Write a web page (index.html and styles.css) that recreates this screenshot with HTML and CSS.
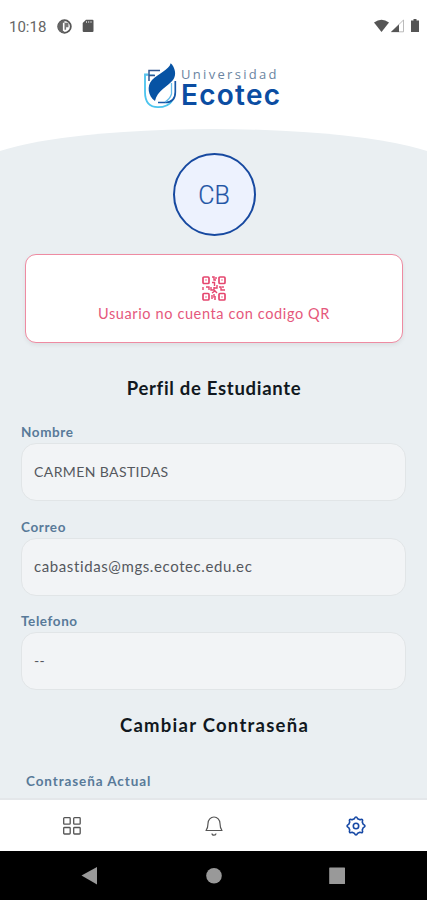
FILE: index.html
```html
<!DOCTYPE html>
<html lang="es">
<head>
<meta charset="utf-8">
<title>Perfil</title>
<link rel="stylesheet" href="styles.css">
</head>
<body>
<div class="screen">
  <div class="status">
    <span class="time">10:18</span>
    <svg class="s-app" width="15" height="15" viewBox="0 0 14 14"><circle cx="7" cy="7" r="5.900" fill="#fff" stroke="#555" stroke-width="1.700"/><path d="M7 1v2.500H5.500V11L7 12v1A6 6 0 0 1 3.500 2Z" fill="#666"/><path d="M7 3.500h3.700v4.200H8.500V10H7Z" fill="#777"/></svg>
    <svg class="s-sd" width="12" height="14" viewBox="0 0 12 14"><path d="M4 .7h6.500q1 0 1 1V12q0 1-1 1H1.700q-1 0-1-1V4Z" fill="#555"/><path d="M4.500 2v2M6.700 2v2M9 2v2" stroke="#bbb" stroke-width="1"/></svg>
    <div class="spacer"></div>
    <svg width="44" height="14" viewBox="0 0 44 14"><path d="M0 3.500Q7.500-2 15 3.500L7.500 13Z" fill="#555"/><path d="M17.500 12.800 29.500 1v11.800Z" fill="#fff" stroke="#aaa" stroke-width=".8"/><path d="M17 13 25 5.500V13Z" fill="#555"/></svg>
    <svg class="s-bat" width="8" height="14" viewBox="0 0 8 14"><path d="M2.500 0h3v1.500H8V13H0V1.500h2.500Z" fill="#555"/></svg>
  </div>
  <header class="brand">
    <svg width="34" height="46" viewBox="0 0 34 46"><g fill="none"><path d="M4 11.500H1V29Q1 44.200 14 44.200 24 44.200 28 38" stroke="#4bc4ee" stroke-width="1.800"/><path d="M1 12H10.500" stroke="#63bfea" stroke-width="1.300"/><path d="M5 18V7.500H16M5 12.500H11" stroke="#31568f" stroke-width="1.500"/><path d="M31.300 18V29Q31.300 39.500 21 39.500H14" stroke="#1558a8" stroke-width="1.700"/><path d="M27.500 20V31Q26 36 21 39" stroke="#65bce9" stroke-width="1.300"/></g><path d="M26.700 .2C31 4 33 12 29 17 24 23 13 28 11 38 4 33 2.500 23 8 17 14 10.500 25 7 26.700 .2Z" fill="#0753a4"/></svg>
    <div class="brand-name"><span class="uni">Universidad</span><span class="eco">Ecotec</span></div>
  </header>
  <main class="content">
    <svg class="arch" width="427" height="40" viewBox="0 0 427 40"><ellipse cx="213.500" cy="38" rx="235" ry="38" fill="#eaeff2"/></svg>
    <div class="avatar"><span>CB</span></div>
    <section class="qr-card">
      <svg width="24" height="25" viewBox="0 0 24 25" fill="none" stroke="#e5476f"><g stroke-width="1.700"><rect x="1" y="1" width="6" height="6.500" rx="1"/><rect x="17" y="1" width="6" height="6.500" rx="1"/><rect x="1" y="17.500" width="6" height="6.500" rx="1"/><rect x="17" y="17.500" width="6" height="6.500" rx="1"/></g><path d="M10 1h2v3h2M10 6.500h2.500V10M14 1v2M1 11v3M4 11h3v3M9 11v3h3v-3M15 9v3h-3M17 11h2v3h4M21 10v2M10 17l3-2 2 2M10 19v4M12 18v3h2M14 23h-2M3.500 4h1M19.500 4h1M3.500 21h1M19.500 21h1" stroke-width="1.400"/></svg>
      <p>Usuario no cuenta con codigo QR</p>
    </section>
    <h2 class="h-perfil">Perfil de Estudiante</h2>
    <div class="field"><label>Nombre</label><div class="box">CARMEN BASTIDAS</div></div>
    <div class="field"><label>Correo</label><div class="box mail">cabastidas@mgs.ecotec.edu.ec</div></div>
    <div class="field"><label>Telefono</label><div class="box">--</div></div>
    <h2 class="h-clave">Cambiar Contraseña</h2>
    <label class="l-actual">Contraseña Actual</label>
  </main>
  <nav class="tabs">
    <div><svg width="20" height="20" viewBox="0 0 20 20" fill="none" stroke="#555" stroke-width="1.300"><rect x="1.700" y="1.700" width="6.500" height="6.500" rx=".8"/><rect x="11.700" y="1.700" width="6.500" height="6.500" rx=".8"/><rect x="1.700" y="11.500" width="6.500" height="6.500" rx=".8"/><rect x="11.700" y="11.500" width="6.500" height="6.500" rx=".8"/></svg></div>
    <div><svg width="20" height="22" viewBox="0 0 20 22" fill="none" stroke="#555" stroke-width="1.200" stroke-linejoin="round"><path d="M2 15.500C4 13 4 11 4 8.500a6 6.500 0 0 1 12 0C16 11 16 13 18 15.500Z"/><path d="M8 18.500a2 1.700 0 0 0 4 0"/></svg></div>
    <div><svg width="22" height="22" viewBox="0 0 22 22" fill="none" stroke="#1749a5" stroke-width="1.600" stroke-linejoin="round"><path d="M9.300 3.800Q11 .2 12.700 3.800L14.900 4.700Q18.600 3.400 17.300 7.100L18.200 9.300Q21.800 11 18.200 12.700L17.300 14.900Q18.600 18.600 14.900 17.300L12.700 18.200Q11 21.800 9.300 18.200L7.100 17.300Q3.400 18.600 4.700 14.900L3.800 12.700Q.2 11 3.800 9.300L4.700 7.100Q3.400 3.400 7.100 4.700Z"/><circle cx="11" cy="11" r="2.700"/></svg></div>
  </nav>
  <div class="sysnav">
    <svg width="427" height="49" viewBox="0 0 427 49" fill="#999"><path d="M81.500 24.500 97 16v17.500Z"/><circle cx="214" cy="24.700" r="7.800"/><rect x="329.200" y="16.500" width="15.800" height="16.500" rx=".6"/></svg>
  </div>
</div>
</body>
</html>
```
FILE: styles.css
```css
* { box-sizing: border-box; }
body { margin: 0; font-family: Lato, sans-serif; }
h2, p { margin: 0; }
svg { display: block; flex: none; }
.screen { width: 427px; height: 900px; overflow: hidden; background: #fff; display: flex; flex-direction: column; }
.status { height: 52px; flex: none; display: flex; align-items: center; padding: 0 7px 0 9px; }
.time { font: 400 15px/20px Roboto, sans-serif; color: #666; width: 48px; padding-top: 1px; }
.s-sd { margin-left: 10px; }
.spacer { flex: 1; }
.s-bat { margin-left: -7px; margin-right: 1px; }
.brand { height: 77px; flex: none; display: flex; padding: 11px 0 0 144px; }
.brand-name { display: flex; flex-direction: column; padding: 3px 0 0 3px; }
.uni { font: 400 13px/16px "Open Sans", sans-serif; color: #6a84a1; letter-spacing: 2.300px; white-space: nowrap; }
.eco { font: 600 28px/26px Inter, sans-serif; color: #0b4da2; letter-spacing: 1.250px; }
.content { height: 671px; flex: none; display: flex; flex-direction: column; background: linear-gradient(#fff 37px, #eaeff2 37px); border-bottom: 2px solid #e4e7ea; }
.arch { margin-bottom: -16px; }
.avatar { width: 83px; height: 83px; flex: none; margin-left: 172.500px; border: 2px solid #1749a0; border-radius: 50%; background: #edf2fe; display: flex; align-items: center; justify-content: center; font: 300 25px/30px Roboto, sans-serif; color: #1f55a5; padding-top: 3px; -webkit-text-stroke: .2px; }
.qr-card { width: 378px; height: 89px; flex: none; margin: 18px 0 0 25px; background: #fff; border: 1.500px solid #ee8ba2; border-radius: 11px; box-shadow: 0 2px 4px #0001; display: flex; flex-direction: column; align-items: center; padding-top: 21px; }
.qr-card p { font-size: 14.500px; line-height: 20px; color: #e5587c; letter-spacing: .62px; margin-top: 3px; white-space: nowrap; }
h2 { font-size: 18.500px; line-height: 24px; font-weight: 700; color: #111820; text-align: center; }
.h-perfil { margin: 33px 0 23px; letter-spacing: .7px; padding-left: 1px; }
.field { width: 385px; height: 94.700px; flex: none; margin-left: 21px; }
label { display: block; font-size: 13.500px; line-height: 18px; height: 20px; font-weight: 700; color: #587a99; letter-spacing: .6px; }
.box { height: 58px; border: 1px solid #e1e5e7; border-radius: 15px; background: #f2f4f6; display: flex; align-items: center; padding: 0 0 2px 12px; font-size: 14px; color: #55585e; letter-spacing: .4px; }
.mail { font-size: 15px; letter-spacing: .6px; }
.h-clave { margin: 6px 0 31px; letter-spacing: 1.250px; padding-left: 2px; }
.l-actual { margin-left: 26px; margin-top: 4px; letter-spacing: .9px; }
.tabs { height: 51px; flex: none; display: grid; grid-template-columns: repeat(3, 1fr); place-items: center; padding-left: 1px; }
.sysnav { height: 49px; flex: none; background: #000; }
```
